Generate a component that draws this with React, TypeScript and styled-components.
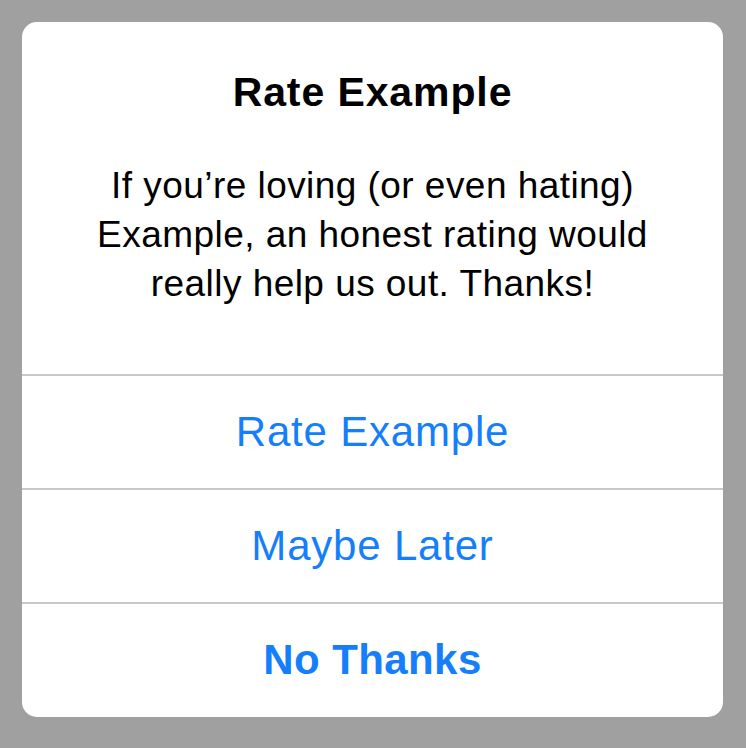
import React from "react";
import styled, { createGlobalStyle } from "styled-components";

const Global = createGlobalStyle`
  html, body {
    margin: 0;
    padding: 0;
    background: #a0a0a0;
  }
  body {
    font-family: "Liberation Sans", Arial, sans-serif;
    -webkit-font-smoothing: antialiased;
  }
`;

const Page = styled.div`
  width: 746px;
  height: 748px;
  padding: 22px 23px 31px 22px;
  box-sizing: border-box;
  background: #a0a0a0;
`;

const Card = styled.div`
  width: 701px;
  height: 695px;
  background: #ffffff;
  border-radius: 15px;
  overflow: hidden;
  display: flex;
  flex-direction: column;
`;

const Header = styled.div`
  height: 352px;
  box-sizing: border-box;
  padding-top: 47px;
  display: flex;
  flex-direction: column;
  align-items: center;
`;

const Title = styled.h1`
  margin: 0;
  font-size: 41px;
  line-height: 46px;
  font-weight: 700;
  color: #000;
  letter-spacing: 0.9px;
`;

const Message = styled.p`
  margin: 46px 0 0;
  font-size: 37px;
  line-height: 49px;
  font-weight: 400;
  color: #000;
  text-align: center;
  letter-spacing: 0.45px;
`;

const Action = styled.button<{ $bold?: boolean }>`
  height: 114px;
  flex: 0 0 auto;
  box-sizing: border-box;
  border: 0;
  border-top: 2px solid #c8c8cc;
  background: transparent;
  padding: 0;
  margin: 0;
  font-family: "Liberation Sans", Arial, sans-serif;
  font-size: 42px;
  font-weight: ${(p) => (p.$bold ? 700 : 400)};
  letter-spacing: ${(p) => (p.$bold ? "0.4px" : "0.8px")};
  color: #157efb;
  display: flex;
  align-items: center;
  justify-content: center;
`;

export default function App() {
  return (
    <>
      <Global />
      <Page>
        <Card>
          <Header>
            <Title>Rate Example</Title>
            <Message>
              If you’re loving (or even hating)
              <br />
              Example, an honest rating would
              <br />
              really help us out. Thanks!
            </Message>
          </Header>
          <Action>Rate Example</Action>
          <Action>Maybe Later</Action>
          <Action $bold>No Thanks</Action>
        </Card>
      </Page>
    </>
  );
}
